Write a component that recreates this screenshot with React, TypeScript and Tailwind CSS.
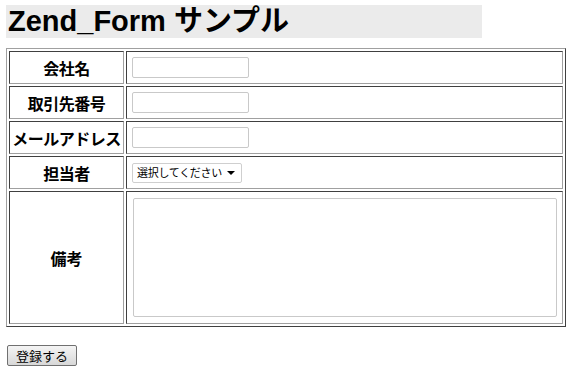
import React from "react";

const rows = [
  { label: "会社名", kind: "text" },
  { label: "取引先番号", kind: "text" },
  { label: "メールアドレス", kind: "text" },
  { label: "担当者", kind: "select" },
];

const cellBorder =
  "border border-t-[#404040] border-l-[#404040] border-r-[#a0a0a0] border-b-[#a0a0a0]";

export default function App() {
  return (
    <div className="min-h-screen bg-white px-[6px] pt-[5px] font-['Noto_Sans_CJK_JP',sans-serif] text-black">
      {/* Title */}
      <h1 className="w-[476px] h-[33px] bg-[#ebebeb] pl-[2px] text-[29px] leading-[33px] font-bold font-['Liberation_Sans','Noto_Sans_CJK_JP',sans-serif] whitespace-nowrap">
        Zend_Form サンプル
      </h1>

      {/* Form table */}
      <table className="mt-[10px] w-[560px] table-fixed border-separate border-spacing-[2px] border border-t-[#a0a0a0] border-l-[#a0a0a0] border-r-[#404040] border-b-[#404040]">
        <colgroup>
          <col className="w-[115px]" />
          <col />
        </colgroup>
        <tbody>
          {rows.map((row) => (
            <tr key={row.label} className="h-[33px]">
              <td
                className={`${cellBorder} p-0 text-center text-[16px] font-bold whitespace-nowrap tracking-[-0.5px]`}
              >
                {row.label}
              </td>
              <td className={`${cellBorder} px-[5px] py-0 align-middle`}>
                {row.kind === "text" ? (
                  <div className="h-[21px] w-[117px] rounded-[2px] border border-[#c9c9c9] bg-white" />
                ) : (
                  <div className="flex h-[20px] w-[110px] items-center justify-between rounded-[2px] border border-[#cfcfcf] bg-white pl-[4px] pr-[6px] text-[11px] leading-none whitespace-nowrap tracking-[-0.3px]">
                    <span>選択してください</span>
                    <span className="h-0 w-0 border-x-[4px] border-t-[4px] border-x-transparent border-t-black" />
                  </div>
                )}
              </td>
            </tr>
          ))}
          <tr className="h-[133px]">
            <td className={`${cellBorder} p-0 text-center text-[16px] font-bold`}>
              備考
            </td>
            <td className={`${cellBorder} px-[6px] py-[6px]`}>
              <div className="h-[119px] w-[424px] rounded-[2px] border border-[#c9c9c9] bg-white" />
            </td>
          </tr>
        </tbody>
      </table>

      {/* Submit */}
      <button className="mt-[18px] ml-px flex h-[21px] w-[70px] items-center justify-center rounded-[2px] border border-[#707070] bg-gradient-to-b from-[#f4f4f4] to-[#d8d8d8] text-[13px] leading-none">
        登録する
      </button>
    </div>
  );
}
